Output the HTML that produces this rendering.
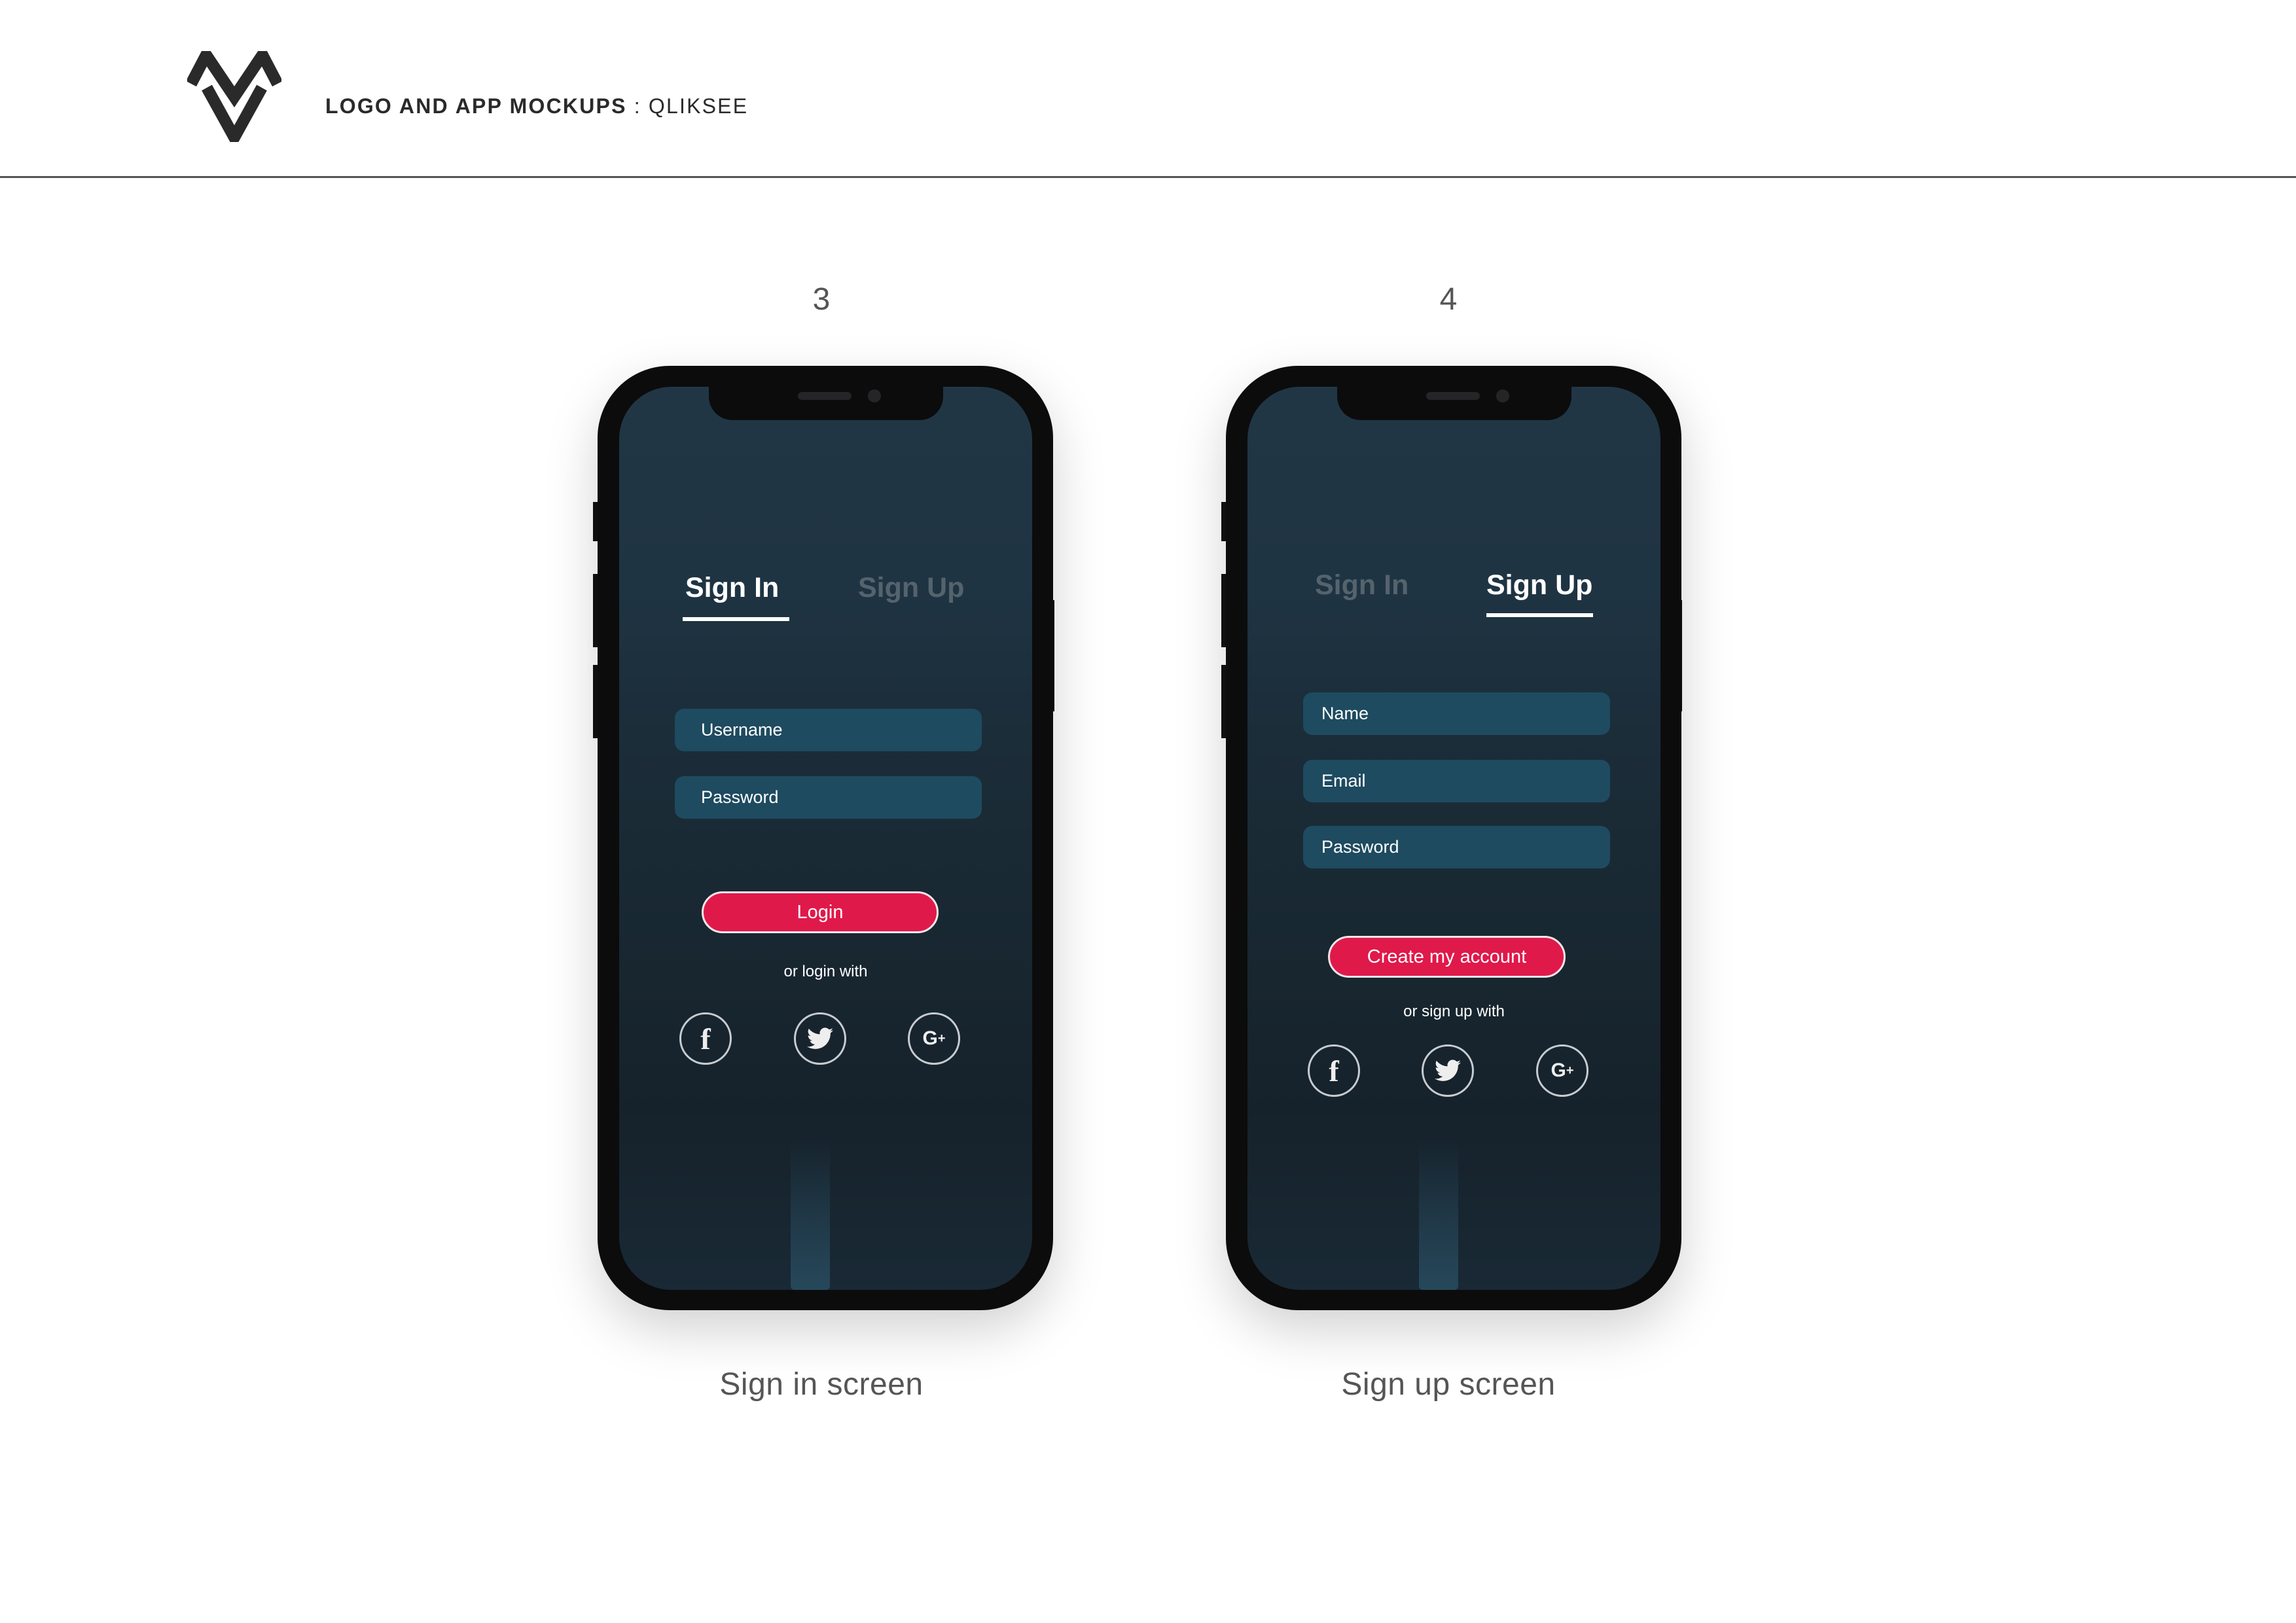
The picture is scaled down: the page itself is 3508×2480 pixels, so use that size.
<!DOCTYPE html>
<html><head><meta charset="utf-8"><style>
*{margin:0;padding:0;box-sizing:border-box}
body{width:3508px;height:2480px;background:#fff;position:relative;overflow:hidden;font-family:"Liberation Sans",sans-serif}
.abs{position:absolute}
.hdr{left:497px;top:144px;font-size:32px;letter-spacing:2.2px;color:#2a2a2a;white-space:nowrap}
.rule{left:0;top:269px;width:3508px;height:3px;background:#555}
.num{font-size:48px;color:#555;width:200px;text-align:center;top:430px}
.cap{font-size:48px;color:#555;width:600px;text-align:center;top:2088px;letter-spacing:0.5px}
.phone{top:559px;width:696px;height:1443px;background:#0c0c0d;border-radius:110px;box-shadow:0 30px 80px rgba(0,0,0,.18)}
.btn{background:#111;width:8px}
.screen{left:33px;top:32px;width:631px;height:1380px;border-radius:80px;overflow:hidden;
background:linear-gradient(180deg,#213645 0%,#1f3443 22%,#1c2e3b 35%,#192933 55%,#16222b 80%,#192935 100%)}
.notch{left:137px;top:0;width:358px;height:51px;background:#0c0c0d;border-radius:0 0 36px 36px}
.tab{font-size:43px;font-weight:bold;white-space:nowrap}
.field{left:85px;width:469px;height:65px;border-radius:14px;background:#1e4b60;color:#fff;font-size:27px;padding-left:40px;line-height:65px}
.cta{background:#e0194b;border:3px solid #f2e6ea;border-radius:40px;color:#fff;font-size:29px;text-align:center}
.small{width:631px;left:0;text-align:center;color:#fff;font-size:24px}
.ic{width:80px;height:80px;border:3px solid #c8ccd0;border-radius:50%;color:#eee;display:flex;align-items:center;justify-content:center;font-weight:bold}
.road{left:262px;width:60px;background:linear-gradient(180deg,rgba(40,70,90,0),rgba(40,75,95,.9));border-radius:6px}
</style></head><body>
<svg class="abs" style="left:286px;top:78px" width="144" height="139" viewBox="0 0 144 139">
<polyline points="6,50 29,6 72,70 115,6 138,50" fill="none" stroke="#2a2a2a" stroke-width="18" stroke-linejoin="miter" stroke-miterlimit="10"/>
<polyline points="30,56 72,132 114,56" fill="none" stroke="#2a2a2a" stroke-width="18" stroke-linejoin="miter" stroke-miterlimit="10"/>
</svg>
<div class="abs hdr"><b>LOGO AND APP MOCKUPS</b> : QLIKSEE</div>
<div class="abs rule"></div>
<div class="abs num" style="left:1155px">3</div>
<div class="abs num" style="left:2113px">4</div>

<!-- phone 1 -->
<div class="abs btn" style="left:906px;top:767px;height:60px"></div>
<div class="abs btn" style="left:906px;top:877px;height:112px"></div>
<div class="abs btn" style="left:906px;top:1016px;height:112px"></div>
<div class="abs btn" style="left:1603px;top:917px;height:170px"></div>
<div class="abs phone" style="left:913px">
 <div class="abs screen">
  <div class="abs road" style="top:1150px;height:230px"></div>
  <div class="abs tab" style="left:101px;top:283px;color:#fff">Sign In</div>
  <div class="abs" style="left:97px;top:352px;width:163px;height:6px;background:#fff"></div>
  <div class="abs tab" style="left:365px;top:283px;color:#55636d">Sign Up</div>
  <div class="abs field" style="top:492px">Username</div>
  <div class="abs field" style="top:595px">Password</div>
  <div class="abs cta" style="left:126px;top:771px;width:362px;height:64px;line-height:58px">Login</div>
  <div class="abs small" style="top:880px">or login with</div>
  <div class="abs ic" style="left:92px;top:956px;font-size:46px;font-family:'Liberation Serif',serif">f</div>
  <div class="abs ic" style="left:267px;top:956px"><svg width="40" height="34" viewBox="0 0 24 20"><path fill="#eee" d="M24 2.4c-.9.4-1.8.6-2.8.8 1-.6 1.800-1.6 2.2-2.7-1 .6-2 1-3.1 1.2C19.3.7 18 0 16.6 0c-2.7 0-4.9 2.2-4.9 4.9 0 .4 0 .8.1 1.1C7.7 5.8 4.1 3.9 1.7.9c-.4.7-.7 1.6-.7 2.5 0 1.7.9 3.2 2.2 4.1-.8 0-1.6-.2-2.2-.6v.1c0 2.4 1.7 4.4 3.9 4.8-.4.1-.8.2-1.3.2-.3 0-.6 0-.9-.1.6 2 2.4 3.4 4.6 3.4-1.7 1.3-3.8 2.1-6.1 2.1-.4 0-.8 0-1.2-.1 2.2 1.4 4.8 2.2 7.5 2.2 9.1 0 14-7.5 14-14v-.6c1-.7 1.8-1.6 2.5-2.5z"/></svg></div>
  <div class="abs ic" style="left:441px;top:956px;font-size:30px">G<span style="font-size:20px">+</span></div>
 </div>
 <div class="abs notch" style="left:170px;top:32px"></div>
 <div class="abs" style="left:306px;top:40px;width:82px;height:12px;border-radius:6px;background:#252527"></div>
 <div class="abs" style="left:413px;top:36px;width:20px;height:20px;border-radius:50%;background:#252527"></div>
</div>

<!-- phone 2 -->
<div class="abs btn" style="left:1866px;top:767px;height:60px"></div>
<div class="abs btn" style="left:1866px;top:877px;height:112px"></div>
<div class="abs btn" style="left:1866px;top:1016px;height:112px"></div>
<div class="abs btn" style="left:2562px;top:917px;height:170px"></div>
<div class="abs phone" style="left:1873px">
 <div class="abs screen">
  <div class="abs road" style="top:1150px;height:230px"></div>
  <div class="abs tab" style="left:103px;top:279px;color:#55636d">Sign In</div>
  <div class="abs tab" style="left:365px;top:279px;color:#fff">Sign Up</div>
  <div class="abs" style="left:365px;top:346px;width:163px;height:6px;background:#fff"></div>
  <div class="abs field" style="top:467px;left:85px;padding-left:28px">Name</div>
  <div class="abs field" style="top:570px;left:85px;padding-left:28px">Email</div>
  <div class="abs field" style="top:671px;left:85px;padding-left:28px">Password</div>
  <div class="abs cta" style="left:123px;top:839px;width:363px;height:64px;line-height:58px">Create my account</div>
  <div class="abs small" style="top:941px">or sign up with</div>
  <div class="abs ic" style="left:92px;top:1005px;font-size:46px;font-family:'Liberation Serif',serif">f</div>
  <div class="abs ic" style="left:266px;top:1005px"><svg width="40" height="34" viewBox="0 0 24 20"><path fill="#eee" d="M24 2.4c-.9.4-1.8.6-2.8.8 1-.6 1.8-1.6 2.2-2.7-1 .6-2 1-3.1 1.2C19.3.7 18 0 16.6 0c-2.7 0-4.9 2.2-4.9 4.9 0 .4 0 .8.1 1.1C7.7 5.8 4.1 3.9 1.7.9c-.4.7-.7 1.6-.7 2.5 0 1.7.9 3.2 2.2 4.1-.8 0-1.6-.2-2.2-.6v.1c0 2.4 1.7 4.4 3.9 4.8-.4.1-.8.2-1.3.2-.3 0-.6 0-.9-.1.6 2 2.4 3.4 4.6 3.4-1.7 1.3-3.8 2.1-6.1 2.1-.4 0-.8 0-1.2-.1 2.2 1.4 4.8 2.2 7.5 2.2 9.1 0 14-7.5 14-14v-.6c1-.7 1.8-1.6 2.5-2.5z"/></svg></div>
  <div class="abs ic" style="left:441px;top:1005px;font-size:30px">G<span style="font-size:20px">+</span></div>
 </div>
 <div class="abs notch" style="left:170px;top:32px"></div>
 <div class="abs" style="left:306px;top:40px;width:82px;height:12px;border-radius:6px;background:#252527"></div>
 <div class="abs" style="left:413px;top:36px;width:20px;height:20px;border-radius:50%;background:#252527"></div>
</div>

<div class="abs cap" style="left:955px">Sign in screen</div>
<div class="abs cap" style="left:1913px">Sign up screen</div>
</body></html>
